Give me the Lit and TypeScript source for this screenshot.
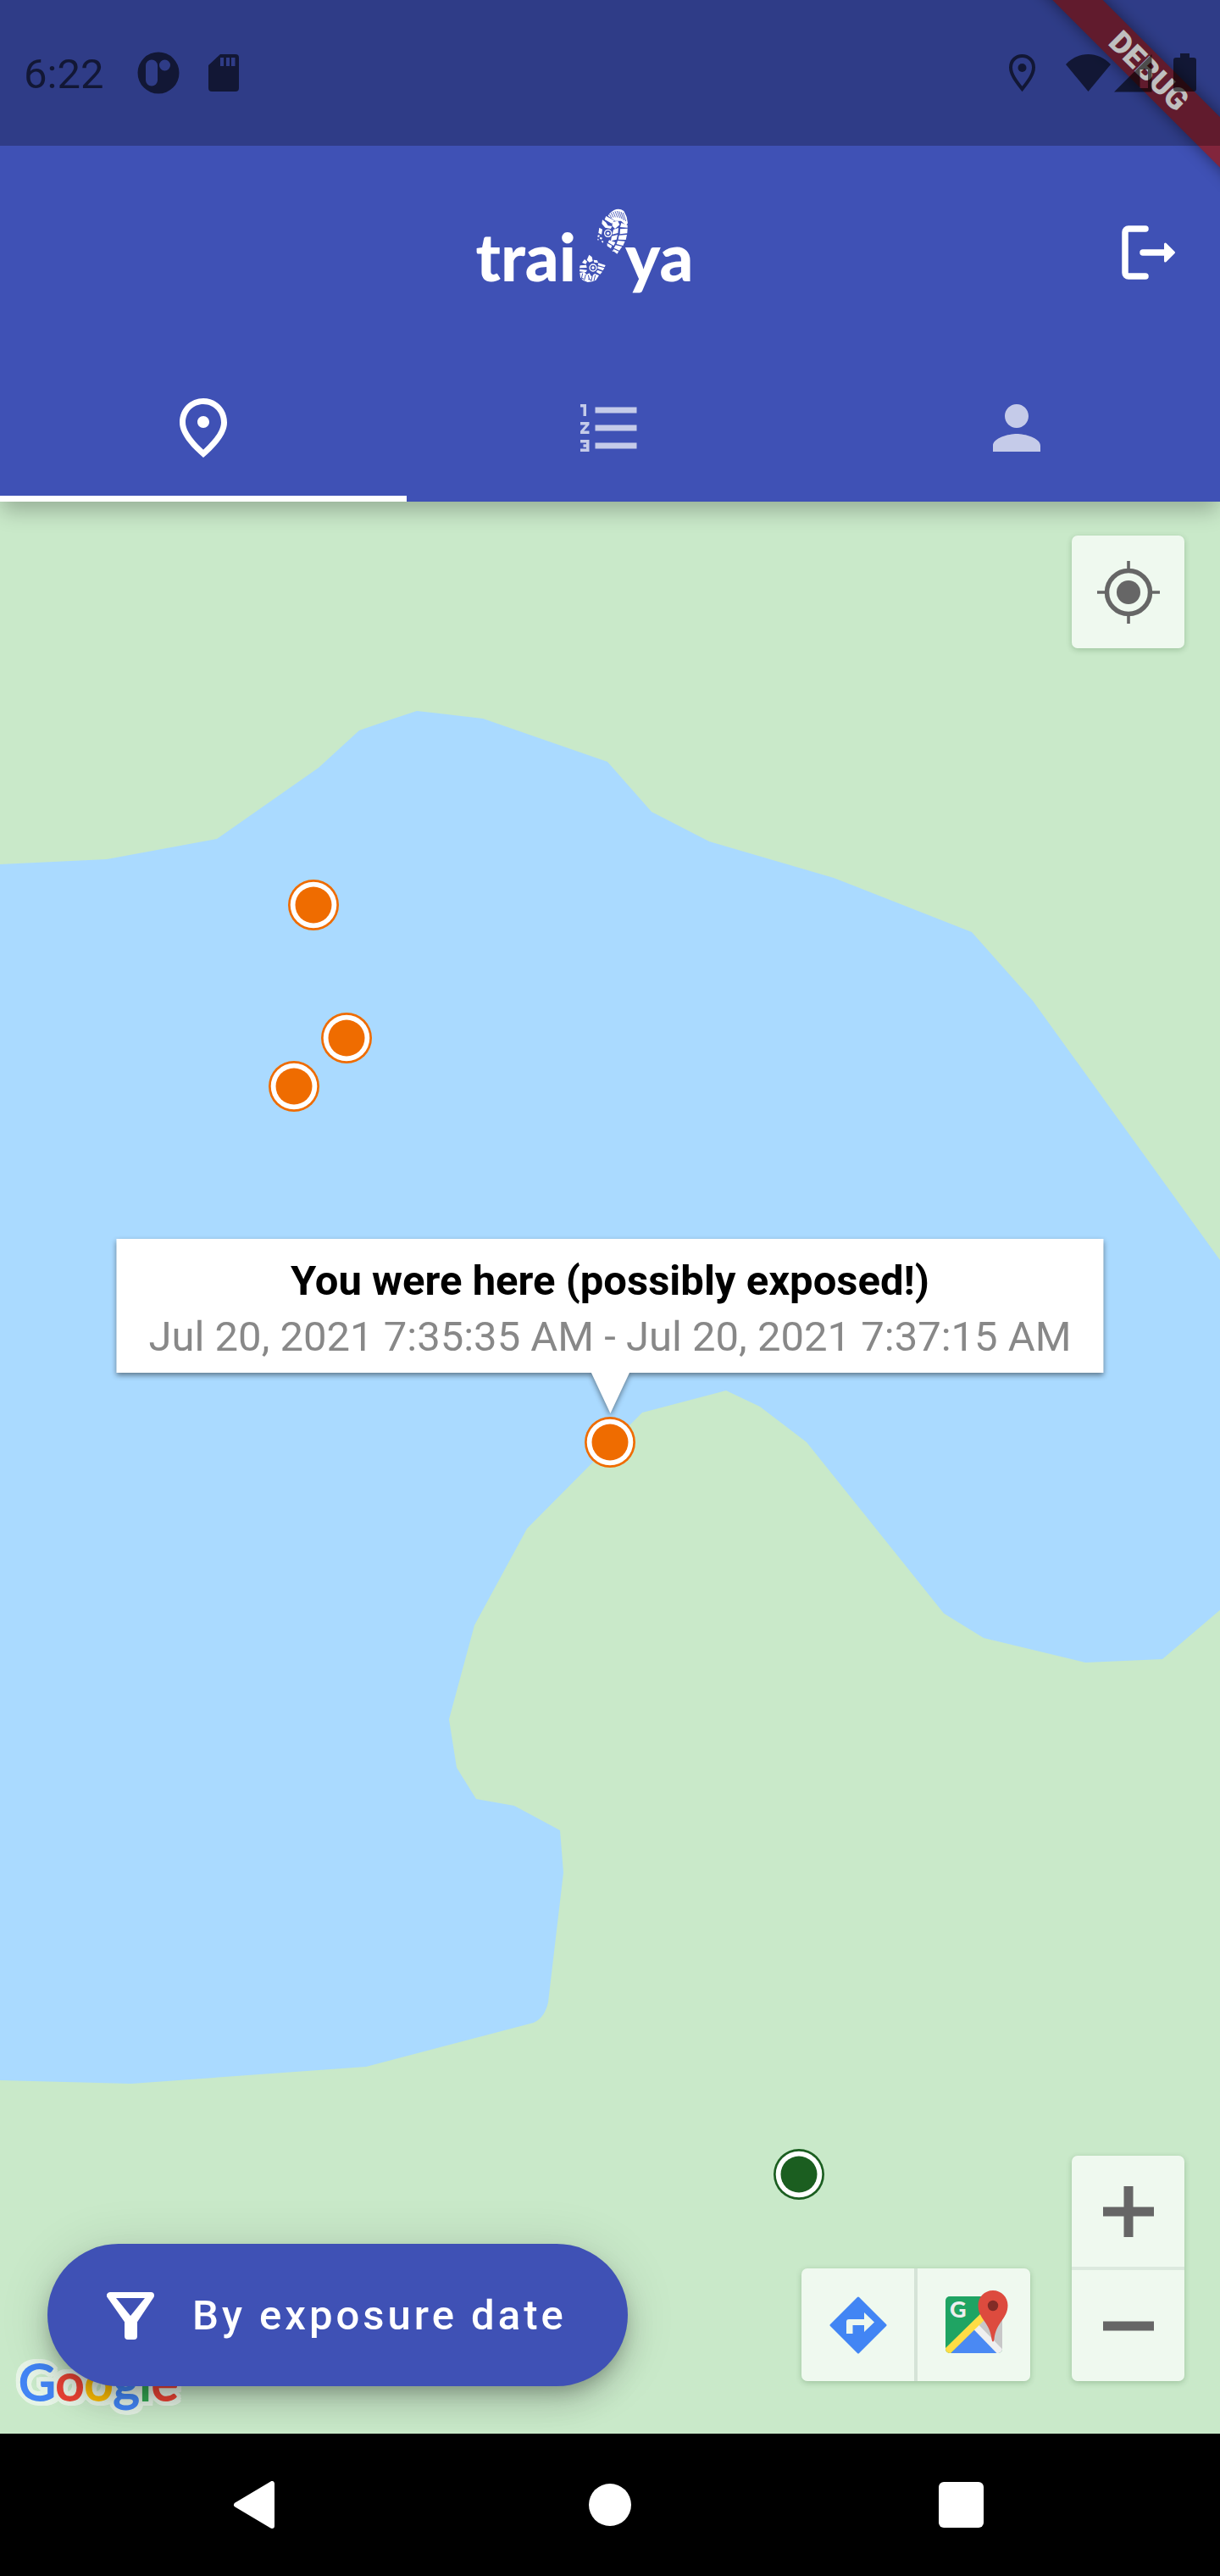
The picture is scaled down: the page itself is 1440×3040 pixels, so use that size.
import { LitElement, html, css, svg } from "lit";
import { customElement, property, state } from "lit/decorators.js";
import { classMap } from "lit/directives/class-map.js";
import { styleMap } from "lit/directives/style-map.js";

/* Map canvas size the coordinates below refer to. */
const MAP_W = 1440;
const MAP_H = 2280;

interface Place {
  x: number;
  y: number;
  exposed: boolean;
  label: string;
}

const PLACES: Place[] = [
  { x: 370, y: 476, exposed: true, label: "Exposure point 1" },
  { x: 409, y: 633, exposed: true, label: "Exposure point 2" },
  { x: 347, y: 690, exposed: true, label: "Exposure point 3" },
  { x: 720, y: 1110, exposed: true, label: "Exposure point 4" },
  { x: 943, y: 1974, exposed: false, label: "Safe point" },
];

const WATER =
  "M0 428 126 422 256 398 376 314 424 270 Q458 258 492 247 L570 256 717 307 769 366 837 401 984 444 1147 508 1219 589 1440 895 V1308 L1372 1366 1281 1370 1161 1341 1114 1312 952 1110 897 1068 857 1049 758 1075 622 1212 560 1326 530 1437 539 1494 562 1531 607 1539 661 1568 665 1618 647 1771 Q643 1789 630 1795 L432 1847 155 1867 0 1863Z";

const pct = (v: number, total: number) => `${(v / total) * 100}%`;

@customElement("status-bar")
class StatusBar extends LitElement {
  static styles = css`
    :host {
      display: flex;
      align-items: center;
      justify-content: space-between;
      box-sizing: border-box;
      min-height: 172px;
      padding: 0 28px;
      background: rgba(0, 0, 0, 0.25);
      color: #000;
      font: 400 49px/58px Roboto, "Liberation Sans", sans-serif;
    }
    .group {
      display: flex;
      align-items: center;
      gap: 34px;
      opacity: 0.6;
    }
    .right {
      gap: 25px;
    }
    .radio {
      display: flex;
      gap: 4px;
    }
    time {
      padding: 3px 6px 0 0;
    }
    svg {
      display: block;
      fill: currentColor;
    }
  `;

  render() {
    return html`
      <div class="group">
        <time>6:22</time>
        <svg width="50" height="50" viewBox="0 0 50 50" aria-hidden="true">
          <path
            fill-rule="evenodd"
            d="M25 .5a24.500 24.500 0 1 1 0 49a24.500 24.500 0 1 1 0-49zM17 9.500a7 7 0 0 0-7 7v17a7 7 0 0 0 14 0v-17a7 7 0 0 0-7-7zM32.500 9.500a6.500 6.500 0 1 0 0 13a6.500 6.500 0 1 0 0-13z"
          />
        </svg>
        <svg width="36" height="46" viewBox="0 0 36 46" aria-hidden="true">
          <path
            fill-rule="evenodd"
            d="M14 1h18a4 4 0 0 1 4 4v36a4 4 0 0 1-4 4H4a4 4 0 0 1-4-4V14zM14 5v10h4V5zM21 5v10h4V5zM27 5v10h4.500V5z"
          />
        </svg>
      </div>
      <div class="group right">
        <svg width="42" height="46" viewBox="0 0 42 46" aria-hidden="true">
          <path
            fill="none"
            stroke="currentColor"
            stroke-width="4"
            d="M15.500 3C8 3 2 8.500 2 16.500c0 8 6 16 13.500 25.500C23 32.500 29 24.500 29 16.500 29 8.500 23 3 15.500 3z"
          />
          <circle cx="15.500" cy="17" r="5" />
        </svg>
        <span class="radio">
          <svg width="53" height="46" viewBox="0 0 53 46" aria-hidden="true">
            <path d="M0 13C15-3 38-3 53 13L26.500 45z" />
          </svg>
          <svg width="45" height="46" viewBox="0 0 45 46" aria-hidden="true">
            <path fill-rule="evenodd" d="M0 45.500L44.500 1v44.500zM30.500 19h9.500v22h-9.500z" />
          </svg>
        </span>
        <svg width="27" height="46" viewBox="0 0 27 46" aria-hidden="true">
          <path
            d="M8 0h11v5h5a3 3 0 0 1 3 3v34a3 3 0 0 1-3 3H3a3 3 0 0 1-3-3V8a3 3 0 0 1 3-3h5z"
          />
        </svg>
      </div>
    `;
  }
}

@customElement("app-header")
class AppHeader extends LitElement {
  @state() private selected = 0;

  static styles = css`
    :host {
      display: block;
      position: relative;
      z-index: 2;
      background: #3f51b5;
      color: #fff;
      box-shadow: 0 12px 24px -2px rgba(0, 0, 0, 0.26);
    }
    status-bar {
      position: relative;
      z-index: 1;
    }
    .banner-clip {
      position: absolute;
      top: 0;
      right: 0;
      width: 240px;
      height: 240px;
      overflow: hidden;
    }
    .banner {
      position: absolute;
      top: 63px;
      left: -44px;
      width: 400px;
      height: 42px;
      transform: rotate(45deg);
      background: #82253c;
      box-shadow: 0 0 18px rgba(0, 0, 0, 0.45);
      font: 900 36px/42px Roboto, "Liberation Sans", sans-serif;
      text-align: center;
    }
    .toolbar {
      display: flex;
      align-items: center;
      min-height: 252px;
    }
    .logo {
      flex: 1;
      display: flex;
      justify-content: center;
      align-items: center;
      padding-left: 108px;
      font: 900 78px/100px Lato, "Open Sans", sans-serif;
    }
    .logo span {
      padding-top: 8px;
    }
    .logo svg {
      display: block;
      overflow: visible;
    }
    button {
      appearance: none;
      border: 0;
      margin: 0;
      padding: 0;
      background: none;
      color: inherit;
      cursor: pointer;
    }
    .logout {
      display: grid;
      place-items: center;
      width: 168px;
      height: 168px;
    }
    .tabs {
      display: grid;
      grid-template-columns: repeat(3, 1fr);
    }
    .tab {
      display: grid;
      place-items: center;
      height: 168px;
      box-sizing: border-box;
      border-bottom: 7px solid transparent;
      color: rgba(255, 255, 255, 0.7);
    }
    .tab.selected {
      color: #fff;
      border-bottom-color: #fff;
    }
    .tab svg {
      width: 84px;
      height: 84px;
      fill: currentColor;
    }
  `;

  private tabs = [
    {
      label: "Map",
      icon: svg`<path d="M12 12c-1.100 0-2-.9-2-2s.9-2 2-2 2 .9 2 2-.9 2-2 2zm6-1.800C18 6.570 15.350 4 12 4s-6 2.570-6 6.200c0 2.340 1.950 5.440 6 9.140 4.050-3.700 6-6.800 6-9.140zM12 2c4.200 0 8 3.220 8 8.200 0 3.320-2.670 7.250-8 11.800-5.330-4.550-8-8.480-8-11.800C4 5.220 7.800 2 12 2z"/>`,
    },
    {
      label: "List",
      icon: svg`<path d="M2 17h2v.5H3v1h1v.5H2v1h3v-4H2v1zm1-9h1V4H2v1h1v3zm-1 3h1.800L2 13.100v.9h3v-1H3.200L5 10.900V10H2v1zm5-6v2h14V5H7zm0 14h14v-2H7v2zm0-6h14v-2H7v2z"/>`,
    },
    {
      label: "Profile",
      icon: svg`<path d="M12 12c2.210 0 4-1.790 4-4s-1.790-4-4-4-4 1.790-4 4 1.790 4 4 4zm0 2c-2.670 0-8 1.340-8 4v2h16v-2c0-2.660-5.330-4-8-4z"/>`,
    },
  ];

  render() {
    return html`
      <div class="banner-clip"><div class="banner">DEBUG</div></div>
      <status-bar></status-bar>
      <div class="toolbar">
        <div class="logo">
          <span>trai</span>
          <svg width="58" height="100" viewBox="423 54 174 300" aria-hidden="true">
            <g fill="#fff">
              <path d="M541 66Q568 40 592 57L602 78 606 100 600 108 582 92 561 92 536 74Z" />
              <path d="M529 75l29 16-9 10-25-14zM516 88l12 9 8 12 14 2-4 9-20-4-12-14z" />
              <path d="M505 116l11 6-3 18-11-5zM551 96l20-4 6 14-16 14-10-10z" />
              <path d="M583 99l22 8v9l-26-2zM579 121l26-2-1 17-26 3zM575 143l28-2-4 18-27-1z" />
              <path d="M570 162l26 2-7 16-23-6zM563 178l23 5-10 14-19-9zM556 192l18 8-6 9-14-11z" />
              <path d="M555 123l18-6-2 18-20 5zM549 146l21-5-4 17-20 5zM540 160l22 8-6 12-20-12zM533 171l17 9-4 10-13-9z" />
              <path d="M499 144l6-3 1 7-6 2zM508 149l8 3-3 6-6-3zM499 155l4 1-1 5-3-1zM514 162l6 2-2 6-5-4zM551 194l5 6-4 1z" />
            </g>
            <circle cx="536" cy="136" r="12" fill="none" stroke="#fff" stroke-width="4" />
            <circle cx="536" cy="136" r="5" fill="#fff" />
            <path
              d="M541 68l7 13M547 63l8 17M554 60l8 19M561 58l9 22M568 57l10 25M575 58l10 27M582 60l10 30M589 63l10 30"
              stroke="#3f51b5"
              stroke-width="2.500"
              fill="none"
            />
            <g fill="#fff">
              <path d="M469 212l10 8 3 14-12 5-9-9zM453 228l9 8-5 9-13-5z" />
              <path d="M485 230l13 2 3 9-14-2zM502 241l25 8-3 7-24-7zM500 253l23 6-5 9-19-8z" />
              <path d="M437 250l22-2 2 10-26 1zM436 263l26 3-4 8-23-3zM499 266l17 6-8 9-14-8z" />
              <path d="M436 276l16-3 8 9 10-5 7 12 12-10 15 6-11 17-13 5-16 2-17-7-9-10z" />
            </g>
            <circle cx="483" cy="258" r="12" fill="none" stroke="#fff" stroke-width="4" />
            <circle cx="483" cy="258" r="5" fill="#fff" />
            <path
              d="M446 278l-4 18M457 282l-5 20M466 284l4 16M481 285l-5 20M491 284l-5 20M442 294l8 4 M466 298l12 4"
              stroke="#3f51b5"
              stroke-width="3"
              fill="none"
            />
          </svg>
          <span>ya</span>
        </div>
        <button class="logout" aria-label="Log out">
          <svg width="64" height="64" viewBox="0 0 64 64" fill="none" aria-hidden="true">
            <path
              d="M28 4H8a4 4 0 0 0-4 4v48a4 4 0 0 0 4 4h20M25 32h27"
              stroke="#fff"
              stroke-width="7.500"
              stroke-linecap="round"
            />
            <path
              d="M51.500 22v20L61.500 32z"
              fill="#fff"
              stroke="#fff"
              stroke-width="3"
              stroke-linejoin="round"
            />
          </svg>
        </button>
      </div>
      <div class="tabs" role="tablist">
        ${this.tabs.map(
          (t, i) => html`
            <button
              class=${classMap({ tab: true, selected: i === this.selected })}
              role="tab"
              aria-label=${t.label}
              aria-selected=${i === this.selected}
              @click=${() => (this.selected = i)}
            >
              <svg viewBox="0 0 24 24" aria-hidden="true">${t.icon}</svg>
            </button>
          `
        )}
      </div>
    `;
  }
}

@customElement("map-marker")
class MapMarker extends LitElement {
  @property({ type: Boolean, reflect: true }) exposed = false;
  @property() label = "";

  static styles = css`
    :host {
      display: block;
      color: #1b5e20;
    }
    :host([exposed]) {
      color: #ef6c00;
    }
    button {
      appearance: none;
      display: block;
      border: 0;
      padding: 0;
      background: none;
      color: inherit;
      cursor: pointer;
    }
    svg {
      display: block;
    }
  `;

  render() {
    return html`
      <button aria-label=${this.label}>
        <svg width="60" height="60" viewBox="0 0 60 60" aria-hidden="true">
          <circle cx="30" cy="30" r="30" fill="currentColor" />
          <circle cx="30" cy="30" r="27.300" fill="#fff" />
          <circle cx="30" cy="30" r="21.500" fill="currentColor" />
        </svg>
      </button>
    `;
  }
}

@customElement("map-view")
class MapView extends LitElement {
  static styles = css`
    :host {
      display: flex;
      flex-direction: column;
      position: relative;
      overflow: hidden;
      background: #c9e9c9;
      font-family: Roboto, "Liberation Sans", sans-serif;
    }
    .terrain {
      position: absolute;
      inset: 0;
      width: 100%;
      height: 100%;
    }
    map-marker {
      position: absolute;
      transform: translate(-50%, -50%);
    }
    .info {
      position: absolute;
      transform: translate(-50%, -100%);
      filter: drop-shadow(0 3px 3px rgba(0, 0, 0, 0.45));
      display: flex;
      flex-direction: column;
      align-items: center;
      white-space: nowrap;
      font-size: 49px;
      line-height: 66px;
    }
    .bubble {
      padding: 17px 38px 9px;
      background: #fff;
      text-align: center;
    }
    .bubble h2 {
      margin: 0;
      font: inherit;
      font-weight: 700;
      color: #000;
    }
    .bubble p {
      margin: 0;
      color: #888;
    }
    .pointer {
      display: block;
      margin-top: -1px;
    }
    .google {
      position: absolute;
      left: 22px;
      bottom: 22px;
      font: 400 60px/80px Lato, "Open Sans", sans-serif;
      -webkit-text-stroke: 2px currentColor;
      filter: drop-shadow(3px 0 0 #e6f4e6) drop-shadow(-3px 0 0 #e6f4e6)
        drop-shadow(0 3px 0 #e6f4e6) drop-shadow(0 -3px 0 #e6f4e6)
        drop-shadow(2px 2px 0 #e6f4e6) drop-shadow(-2px -2px 0 #e6f4e6);
    }
    .blue {
      color: #4285f4;
    }
    .red {
      color: #ea4335;
    }
    .yellow {
      color: #fbbc05;
    }
    .green {
      color: #34a853;
    }
    .overlay {
      position: relative;
      flex: 1;
      display: flex;
      flex-direction: column;
      justify-content: space-between;
      padding: 40px 42px 56px 56px;
      pointer-events: none;
    }
    .overlay button,
    .overlay a {
      appearance: none;
      border: 0;
      margin: 0;
      padding: 0;
      background: none;
      color: inherit;
      pointer-events: auto;
      cursor: pointer;
      display: flex;
      align-items: center;
      justify-content: center;
    }
    svg {
      display: block;
    }
    .panel {
      display: flex;
      border-radius: 7px;
      background: rgba(255, 255, 255, 0.7);
      box-shadow: 0 2px 7px rgba(0, 60, 0, 0.22);
      color: #666;
    }
    .locate {
      align-self: flex-end;
    }
    .overlay .panel > button,
    .overlay .panel > a {
      width: 133px;
      height: 133px;
      box-sizing: border-box;
    }
    .overlay .links > a + a {
      width: 137px;
      border-left: 4px solid #d5e3d7;
    }
    .zoom {
      flex-direction: column;
    }
    .overlay .zoom > button:first-child {
      border-bottom: 2px solid #dce9de;
    }
    .overlay .zoom > button:last-child {
      border-top: 2px solid #dce9de;
    }
    .bottom {
      display: flex;
      align-items: flex-end;
      gap: 49px;
    }
    .bottom .panel {
      margin-bottom: 6px;
    }
    .overlay .fab {
      height: 168px;
      box-sizing: border-box;
      gap: 45px;
      padding: 2px 72px 0 70px;
      margin-right: auto;
      border-radius: 84px;
      background: #3f51b5;
      color: #fff;
      font: 500 49px/58px Roboto, "Liberation Sans", sans-serif;
      letter-spacing: 4px;
      box-shadow: 0 10px 18px -4px rgba(0, 0, 0, 0.2), 0 21px 35px rgba(0, 0, 0, 0.14),
        0 4px 63px rgba(0, 0, 0, 0.12);
    }
  `;

  render() {
    const at = (x: number, y: number) => styleMap({ left: pct(x, MAP_W), top: pct(y, MAP_H) });
    return html`
      <svg
        class="terrain"
        viewBox="0 0 ${MAP_W} ${MAP_H}"
        preserveAspectRatio="none"
        aria-hidden="true"
      >
        <path d=${WATER} fill="#aadaff" />
      </svg>
      ${PLACES.map(
        (p) => html`<map-marker
          style=${at(p.x, p.y)}
          ?exposed=${p.exposed}
          .label=${p.label}
        ></map-marker>`
      )}
      <div class="info" style=${at(720, 1076)}>
        <div class="bubble">
          <h2>You were here (possibly exposed!)</h2>
          <p>Jul 20, 2021 7:35:35 AM - Jul 20, 2021 7:37:15 AM</p>
        </div>
        <svg class="pointer" width="46" height="49" viewBox="0 0 46 49" aria-hidden="true">
          <path d="M0 0h46L23 49z" fill="#fff" />
        </svg>
      </div>
      <div class="google">
        <span class="blue">G</span><span class="red">o</span><span class="yellow">o</span
        ><span class="blue">g</span><span class="green">l</span><span class="red">e</span>
      </div>
      <div class="overlay">
        <div class="panel locate">
          <button aria-label="My location">
            <svg width="74" height="74" viewBox="0 0 74 74" fill="none" aria-hidden="true">
              <circle cx="37" cy="37" r="25.500" stroke="currentColor" stroke-width="5.500" />
              <circle cx="37" cy="37" r="14" fill="currentColor" />
              <path d="M37 0v10M37 64v10M0 37h10M64 37h10" stroke="currentColor" stroke-width="3.600" />
            </svg>
          </button>
        </div>
        <div class="bottom">
          <button class="fab">
            <svg width="56" height="56" viewBox="0 0 56 56" aria-hidden="true">
              <path
                d="M4 4H52L32 34V52H25V34Z"
                fill="#fff"
                stroke="#fff"
                stroke-width="8"
                stroke-linejoin="round"
              />
              <path d="M11 7H45L28 28Z" fill="#3f51b5" />
            </svg>
            <span>By exposure date</span>
          </button>
          <div class="panel links">
            <a href="#directions" aria-label="Directions">
              <svg width="68" height="68" viewBox="0 0 68 68" aria-hidden="true">
                <path
                  d="M34 2L66 34 34 66 2 34z"
                  fill="#4285f4"
                  stroke="#4285f4"
                  stroke-width="3"
                  stroke-linejoin="round"
                />
                <path d="M20 44V30q0-3 3-3h18v-8l12 11.500L41 42v-8H27.500v10z" fill="#eef8ee" />
              </svg>
            </a>
            <a href="#maps" aria-label="Open in Google Maps">
              <svg width="81" height="81" viewBox="-7 0 81 81" aria-hidden="true">
                <clipPath id="tile"><rect y="7" width="67" height="67" rx="5" /></clipPath>
                <g clip-path="url(#tile)">
                  <rect y="7" width="67" height="67" fill="#1fa463" />
                  <path d="M36 40L67 12v62H36z" fill="#c8c8c8" />
                  <path d="M3 78L33 43l33 35z" fill="#4a89f3" />
                  <path d="M34 41L66 74" stroke="#efefef" stroke-width="8" />
                  <path d="M-2 76L50 25" stroke="#ffdd45" stroke-width="8.500" />
                  <text
                    x="5"
                    y="32"
                    font-family="Lato, sans-serif"
                    font-weight="900"
                    font-size="27"
                    fill="#eee"
                  >G</text>
                </g>
                <path
                  d="M56 0c10 0 17.500 8 17.500 17.500 0 16-14 20-16 40q-.5 3-1.500 3t-1.500-3c-2-20-16-24-16-40C38.500 8 46 0 56 0z"
                  fill="#dd4b3e"
                />
                <circle cx="56" cy="18" r="6.200" fill="#822b26" />
              </svg>
            </a>
          </div>
          <div class="panel zoom">
            <button aria-label="Zoom in">
              <svg width="60" height="60" viewBox="0 0 60 60" aria-hidden="true">
                <path d="M0 24.500h60v11H0zM24.500 0h11v60h-11z" fill="currentColor" />
              </svg>
            </button>
            <button aria-label="Zoom out">
              <svg width="60" height="60" viewBox="0 0 60 60" aria-hidden="true">
                <path d="M0 24.500h60v11H0z" fill="currentColor" />
              </svg>
            </button>
          </div>
        </div>
      </div>
    `;
  }
}

@customElement("system-nav")
class SystemNav extends LitElement {
  static styles = css`
    :host {
      display: grid;
      grid-template-columns: repeat(3, 1fr);
      padding: 0 92px;
      background: #000;
    }
    button {
      appearance: none;
      display: grid;
      place-items: center;
      height: 168px;
      border: 0;
      padding: 0;
      background: none;
      color: #fff;
      cursor: pointer;
    }
    svg {
      display: block;
      fill: currentColor;
    }
  `;

  render() {
    return html`
      <button aria-label="Back">
        <svg width="56" height="56" viewBox="2 0 56 56" aria-hidden="true">
          <path
            d="M8 28L50 3v50z"
            stroke="currentColor"
            stroke-width="6"
            stroke-linejoin="round"
          />
        </svg>
      </button>
      <button aria-label="Home">
        <svg width="56" height="56" viewBox="0 0 56 56" aria-hidden="true">
          <circle cx="28" cy="28" r="25" />
        </svg>
      </button>
      <button aria-label="Recent apps">
        <svg width="64" height="56" viewBox="0 0 64 56" aria-hidden="true">
          <rect x="1" y="1" width="53" height="54" rx="6" />
        </svg>
      </button>
    `;
  }
}

@customElement("app-root")
class AppRoot extends LitElement {
  static styles = css`
    :host {
      display: flex;
      flex-direction: column;
      min-height: 100vh;
    }
    map-view {
      flex: 1;
    }
  `;

  render() {
    return html`
      <app-header></app-header>
      <map-view></map-view>
      <system-nav></system-nav>
    `;
  }
}
